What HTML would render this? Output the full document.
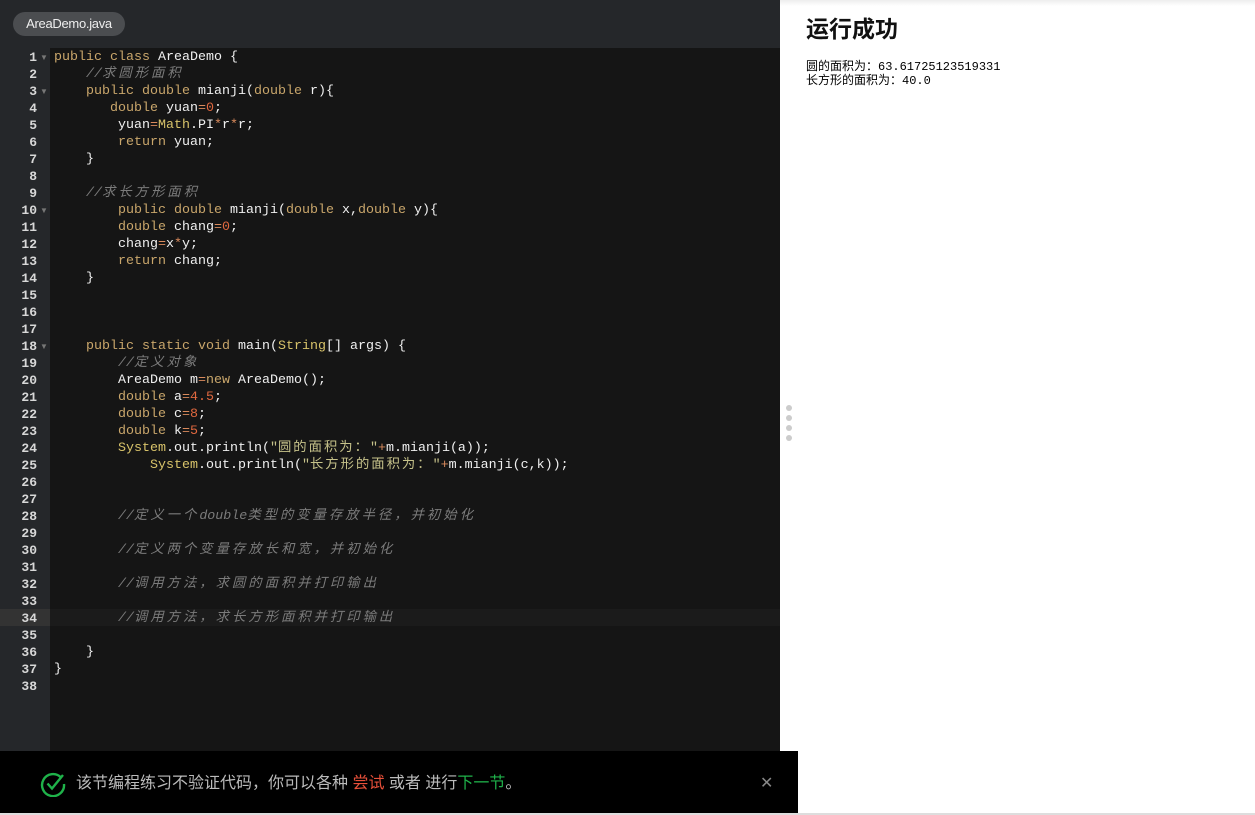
<!DOCTYPE html>
<html><head><meta charset="utf-8"><style>
*{margin:0;padding:0;box-sizing:border-box}
body{width:1255px;height:815px;overflow:hidden;background:#fff;position:relative;font-family:"Liberation Sans","Noto Sans CJK SC",sans-serif}
#top{position:absolute;left:0;top:0;width:780px;height:48px;background:#25272a}
#tab{position:absolute;left:13px;top:12px;height:24px;width:112px;border-radius:12px;background:#4b4d50;color:#eee;font-size:13px;line-height:24px;text-align:center;letter-spacing:-.3px}
#ed{position:absolute;left:0;top:48px;width:780px;height:703px;background:#151515}
#gut{position:absolute;left:0;top:48px;width:50px;height:703px;background:#25272a}
.ln{position:absolute;left:0;width:37px;text-align:right;color:#d8d8d8;font:bold 13px/17px "Liberation Mono",monospace}
.fold{position:absolute;left:40px;color:#777;font-size:8px;line-height:17px}
.cl{position:absolute;left:54px;white-space:pre;color:#f0f0f0;font:normal 13.33px/17px "Liberation Mono","Noto Sans CJK SC",monospace}
.k{color:#c9a66b}
.n{color:#e0683f}
.o{color:#d98a5c}
.y{color:#d8c36a}
.s{color:#c6c28a}
.s i{font-style:normal;letter-spacing:2px}
.c{color:#7b7b7b;font-style:italic}
.c i{letter-spacing:3px}
#hl{position:absolute;left:0;top:609px;width:780px;height:17px;background:#1b1b1b}
#hlg{position:absolute;left:0;top:609px;width:50px;height:17px;background:#333}
#bar{position:absolute;left:0;top:751px;width:798px;height:62px;background:#000}
#bot{position:absolute;left:0;top:813px;width:1255px;height:2px;background:#ddd}
#msg{position:absolute;left:76px;top:774px;color:#bbb;font-size:16px;line-height:20px}
#x{position:absolute;left:760px;top:773px;color:#888;font-size:16px}
h1{position:absolute;left:806px;top:10px;font-size:23px;font-weight:bold;color:#111;font-family:"Liberation Sans","Noto Sans CJK SC",sans-serif}
#out{position:absolute;left:806px;top:60px;font:12px/14px "Liberation Mono","Noto Sans CJK SC",monospace;color:#000}
.dot{position:absolute;left:786px;width:6px;height:6px;border-radius:3px;background:#ccc}
#sh{position:absolute;left:780px;top:0;width:475px;height:6px;background:linear-gradient(#eee,#fff)}
</style></head><body>
<div id="top"><div id="tab">AreaDemo.java</div></div>
<div id="ed"></div><div id="gut"></div>
<div id="hl"></div><div id="hlg"></div>
<div id="sh"></div>
<h1>运行成功</h1>
<div id="out">圆的面积为：63.61725123519331<br>长方形的面积为：40.0</div>
<div class="dot" style="top:405px"></div><div class="dot" style="top:415px"></div><div class="dot" style="top:425px"></div><div class="dot" style="top:435px"></div>

<div style="position:absolute;left:0;top:49px">
<div class="ln" style="top:0">1</div><div class="fold" style="top:0">▼</div>
<div class="ln" style="top:17px">2</div>
<div class="ln" style="top:34px">3</div><div class="fold" style="top:34px">▼</div>
<div class="ln" style="top:51px">4</div>
<div class="ln" style="top:68px">5</div>
<div class="ln" style="top:85px">6</div>
<div class="ln" style="top:102px">7</div>
<div class="ln" style="top:119px">8</div>
<div class="ln" style="top:136px">9</div>
<div class="ln" style="top:153px">10</div><div class="fold" style="top:153px">▼</div>
<div class="ln" style="top:170px">11</div>
<div class="ln" style="top:187px">12</div>
<div class="ln" style="top:204px">13</div>
<div class="ln" style="top:221px">14</div>
<div class="ln" style="top:238px">15</div>
<div class="ln" style="top:255px">16</div>
<div class="ln" style="top:272px">17</div>
<div class="ln" style="top:289px">18</div><div class="fold" style="top:289px">▼</div>
<div class="ln" style="top:306px">19</div>
<div class="ln" style="top:323px">20</div>
<div class="ln" style="top:340px">21</div>
<div class="ln" style="top:357px">22</div>
<div class="ln" style="top:374px">23</div>
<div class="ln" style="top:391px">24</div>
<div class="ln" style="top:408px">25</div>
<div class="ln" style="top:425px">26</div>
<div class="ln" style="top:442px">27</div>
<div class="ln" style="top:459px">28</div>
<div class="ln" style="top:476px">29</div>
<div class="ln" style="top:493px">30</div>
<div class="ln" style="top:510px">31</div>
<div class="ln" style="top:527px">32</div>
<div class="ln" style="top:544px">33</div>
<div class="ln" style="top:561px">34</div>
<div class="ln" style="top:578px">35</div>
<div class="ln" style="top:595px">36</div>
<div class="ln" style="top:612px">37</div>
<div class="ln" style="top:629px">38</div>

<div class="cl" style="top:0"><span class="k">public class</span> AreaDemo {</div>
<div class="cl" style="top:17px">    <span class="c">//<i>求圆形面积</i></span></div>
<div class="cl" style="top:34px">    <span class="k">public double</span> mianji(<span class="k">double</span> r){</div>
<div class="cl" style="top:51px">       <span class="k">double</span> yuan<span class="o">=</span><span class="n">0</span>;</div>
<div class="cl" style="top:68px">        yuan<span class="o">=</span><span class="y">Math</span>.PI<span class="o">*</span>r<span class="o">*</span>r;</div>
<div class="cl" style="top:85px">        <span class="k">return</span> yuan;</div>
<div class="cl" style="top:102px">    }</div>
<div class="cl" style="top:136px">    <span class="c">//<i>求长方形面积</i></span></div>
<div class="cl" style="top:153px">        <span class="k">public double</span> mianji(<span class="k">double</span> x,<span class="k">double</span> y){</div>
<div class="cl" style="top:170px">        <span class="k">double</span> chang<span class="o">=</span><span class="n">0</span>;</div>
<div class="cl" style="top:187px">        chang<span class="o">=</span>x<span class="o">*</span>y;</div>
<div class="cl" style="top:204px">        <span class="k">return</span> chang;</div>
<div class="cl" style="top:221px">    }</div>
<div class="cl" style="top:289px">    <span class="k">public static void</span> main(<span class="y">String</span>[] args) {</div>
<div class="cl" style="top:306px">        <span class="c">//<i>定义对象</i></span></div>
<div class="cl" style="top:323px">        AreaDemo m<span class="o">=</span><span class="k">new</span> AreaDemo();</div>
<div class="cl" style="top:340px">        <span class="k">double</span> a<span class="o">=</span><span class="n">4.5</span>;</div>
<div class="cl" style="top:357px">        <span class="k">double</span> c<span class="o">=</span><span class="n">8</span>;</div>
<div class="cl" style="top:374px">        <span class="k">double</span> k<span class="o">=</span><span class="n">5</span>;</div>
<div class="cl" style="top:391px">        <span class="y">System</span>.out.println(<span class="s">"<i>圆的面积为：</i>"</span><span class="o">+</span>m.mianji(a));</div>
<div class="cl" style="top:408px">            <span class="y">System</span>.out.println(<span class="s">"<i>长方形的面积为：</i>"</span><span class="o">+</span>m.mianji(c,k));</div>
<div class="cl" style="top:459px">        <span class="c">//<i>定义一个</i>double<i>类型的变量存放半径，并初始化</i></span></div>
<div class="cl" style="top:493px">        <span class="c">//<i>定义两个变量存放长和宽，并初始化</i></span></div>
<div class="cl" style="top:527px">        <span class="c">//<i>调用方法，求圆的面积并打印输出</i></span></div>
<div class="cl" style="top:561px">        <span class="c">//<i>调用方法，求长方形面积并打印输出</i></span></div>
<div class="cl" style="top:595px">    }</div>
<div class="cl" style="top:612px">}</div>
</div>

<div id="bar"></div><div id="bot"></div>
<svg style="position:absolute;left:40px;top:771px" width="26" height="26" viewBox="0 0 26 26"><path d="M21 6.5A11 11 0 1 0 24 13" fill="none" stroke="#1fb24a" stroke-width="2.4"/><path d="M7.5 12.5l4.5 5L23 4" fill="none" stroke="#1fb24a" stroke-width="2.4"/></svg>
<div id="msg">该节编程练习不验证代码，你可以各种 <span style="color:#e8503a">尝试</span> 或者 进行<span style="color:#1fb24a">下一节</span>。</div>
<div id="x">✕</div>
</body></html>
